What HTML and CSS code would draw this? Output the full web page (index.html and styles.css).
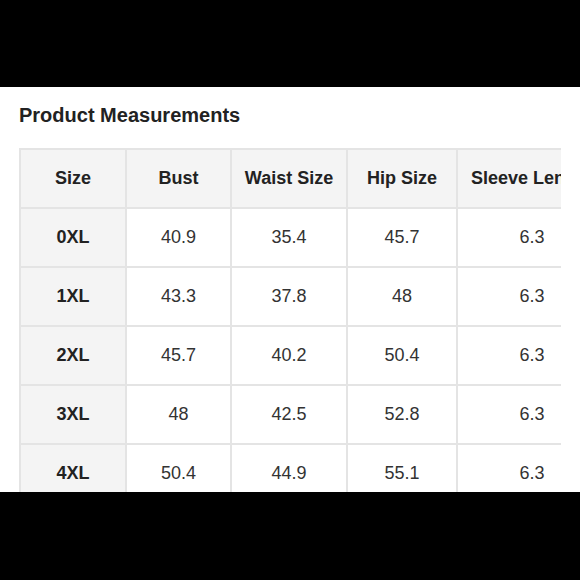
FILE: index.html
```html
<!DOCTYPE html>
<html>
<head>
<meta charset="utf-8">
<link rel="stylesheet" href="styles.css">
</head>
<body>
<div class="frame">
  <div class="band"></div>
  <section class="sheet">
    <h2 class="title">Product Measurements</h2>
    <div class="table-wrap">
      <table class="sizes">
        <colgroup>
          <col class="c1"><col class="c2"><col class="c3"><col class="c4"><col class="c5">
        </colgroup>
        <thead>
          <tr><th>Size</th><th>Bust</th><th>Waist Size</th><th>Hip Size</th><th>Sleeve Length</th></tr>
        </thead>
        <tbody>
          <tr><th>0XL</th><td>40.9</td><td>35.4</td><td>45.7</td><td>6.3</td></tr>
          <tr><th>1XL</th><td>43.3</td><td>37.8</td><td>48</td><td>6.3</td></tr>
          <tr><th>2XL</th><td>45.7</td><td>40.2</td><td>50.4</td><td>6.3</td></tr>
          <tr><th>3XL</th><td>48</td><td>42.5</td><td>52.8</td><td>6.3</td></tr>
          <tr><th>4XL</th><td>50.4</td><td>44.9</td><td>55.1</td><td>6.3</td></tr>
        </tbody>
      </table>
    </div>
  </section>
</div>
</body>
</html>
```

FILE: styles.css
```css
html, body {
  margin: 0;
  padding: 0;
  background: #000;
}
.frame {
  width: 580px;
  height: 580px;
  background: #000;
  overflow: hidden;
}
.band {
  height: 87px;
}
.sheet {
  height: 405px;
  background: #fff;
  overflow: hidden;
  padding: 17px 0 0 19px;
  box-sizing: border-box;
  font-family: "Liberation Sans", Arial, sans-serif;
}
.title {
  margin: 0;
  font-size: 20px;
  line-height: 23px;
  font-weight: bold;
  color: #222;
}
.table-wrap {
  margin-top: 21px;
  width: 542px;
  overflow: hidden;
}
.sizes {
  border-collapse: collapse;
  table-layout: fixed;
  width: 588px;
  font-size: 18px;
  color: #333;
}
.c1 { width: 106px; }
.c2 { width: 105px; }
.c3 { width: 116px; }
.c4 { width: 110px; }
.c5 { width: 150px; }
.sizes th, .sizes td {
  border: 2px solid #e4e4e4;
  height: 57px;
  padding: 0;
  text-align: center;
  vertical-align: middle;
  white-space: nowrap;
  overflow: hidden;
}
.sizes th {
  font-weight: bold;
  color: #222;
  background: #f4f4f4;
}
.sizes td {
  background: #fff;
}
```
